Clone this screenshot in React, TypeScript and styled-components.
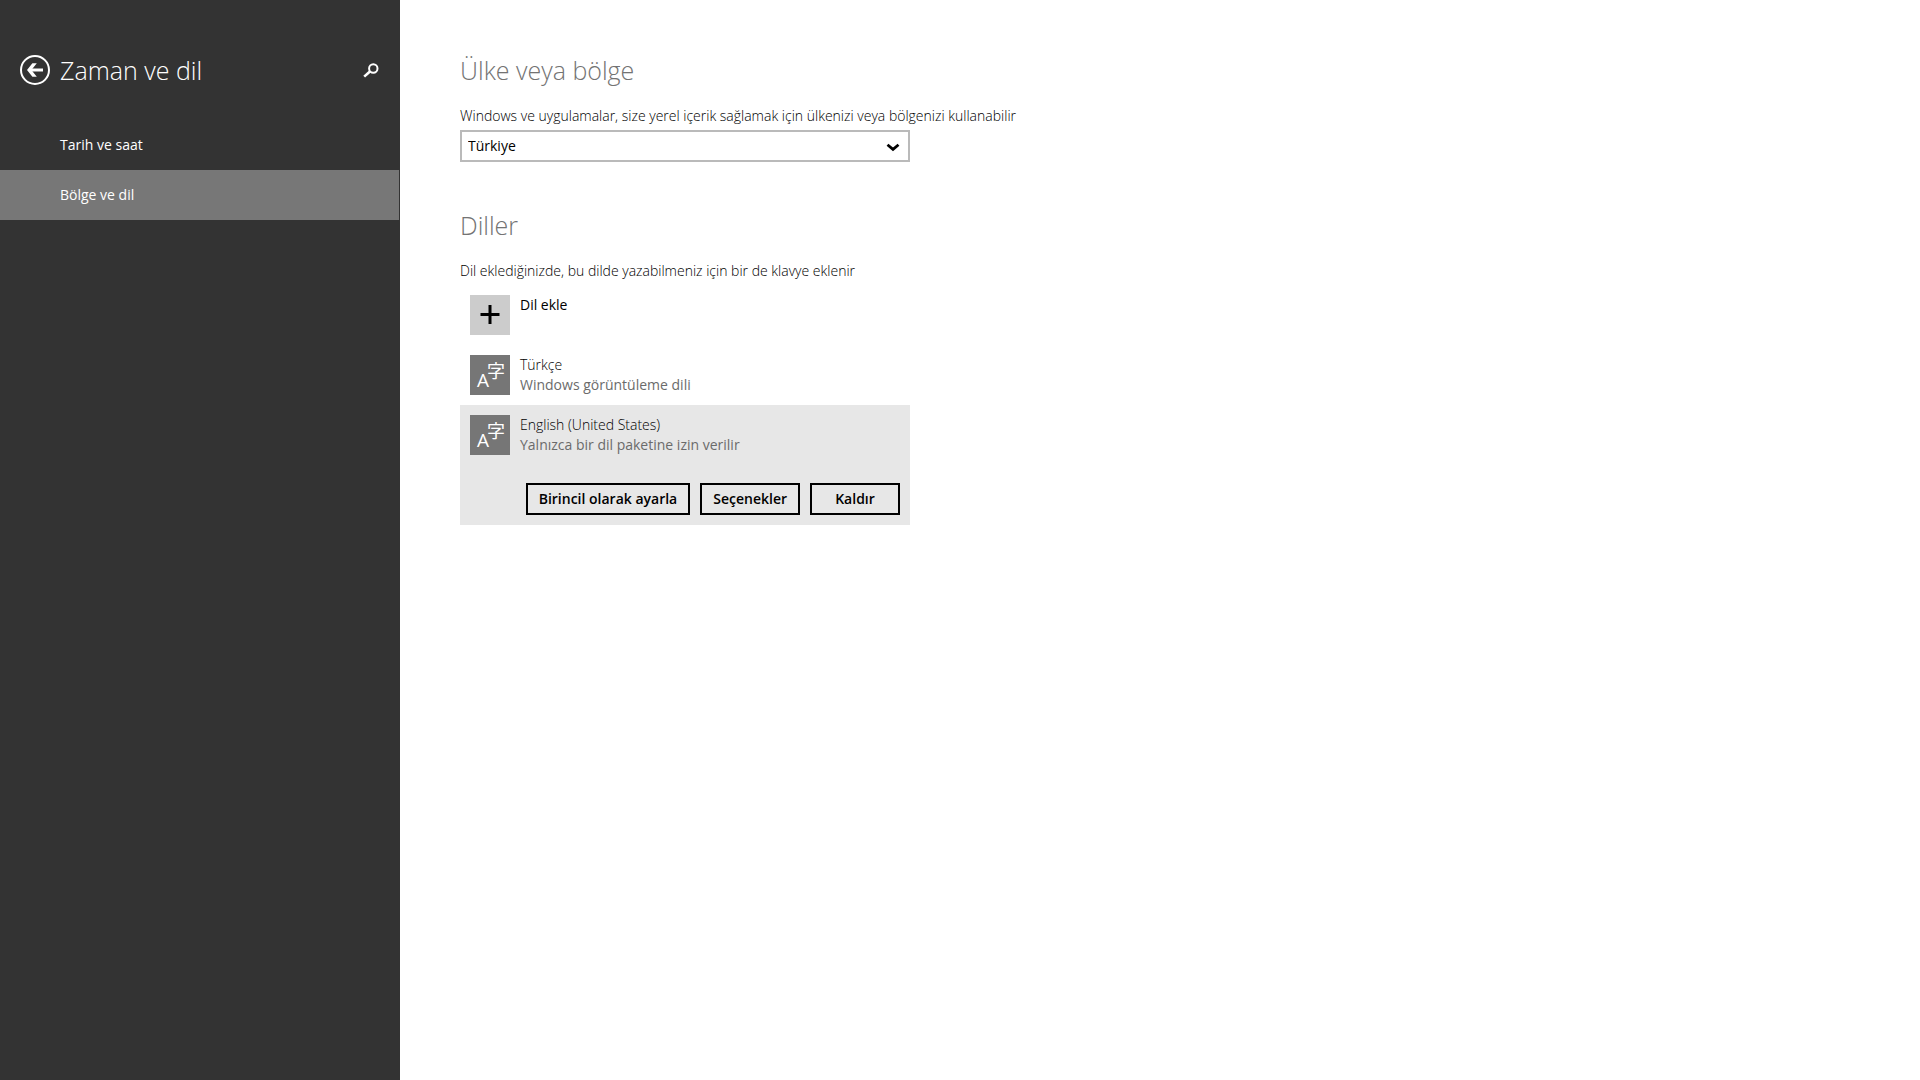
import React, { useState } from "react";
import styled, { createGlobalStyle } from "styled-components";

const GlobalStyle = createGlobalStyle`
  *, *::before, *::after { box-sizing: border-box; }
  body {
    margin: 0;
    background: #fff;
    color: #000;
    font-family: "Segoe UI", "Open Sans", "Noto Sans", sans-serif;
    font-size: 14px;
    line-height: 20px;
  }
  h1, h2, p, ul { margin: 0; padding: 0; }
  button, select { font: inherit; color: inherit; }
`;

const Page = styled.div`
  display: flex;
  min-height: 100vh;
`;

const Sidebar = styled.aside`
  flex: 0 0 400px;
  padding-top: 20px;
  background: #333;
  color: #fff;
`;

const SidebarHeader = styled.header`
  display: flex;
  align-items: center;
  gap: 10px;
  height: 100px;
  padding: 0 21px 0 20px;
`;

const IconButton = styled.button`
  display: flex;
  padding: 0;
  border: 0;
  background: none;
  cursor: pointer;
`;

const PageTitle = styled.h1`
  flex: 1;
  font-size: 25px;
  line-height: 40px;
  font-weight: 300;
`;

const NavList = styled.ul`
  list-style: none;
`;

const NavLink = styled.a<{ $active?: boolean }>`
  display: flex;
  align-items: center;
  height: 50px;
  padding: 0 60px;
  margin-right: 1px;
  color: #fff;
  text-decoration: none;
  background: ${(p) => (p.$active ? "#777" : "transparent")};
`;

const Main = styled.main`
  flex: 1;
  display: flex;
  flex-direction: column;
  gap: 43px;
  padding: 50px 60px;
`;

const Section = styled.section`
  max-width: 640px;
`;

const SectionTitle = styled.h2`
  margin-bottom: 16px;
  color: #737373;
  font-size: 25px;
  line-height: 40px;
  font-weight: 300;
`;

const Caption = styled.p`
  font-weight: 300;
`;

const CaptionLabel = styled.label`
  display: block;
  font-weight: 300;
`;

const SelectBox = styled.div`
  position: relative;
  max-width: 450px;
  margin-top: 4px;

  svg {
    position: absolute;
    right: 10px;
    top: 13px;
    pointer-events: none;
  }
`;

const Select = styled.select`
  appearance: none;
  display: block;
  width: 100%;
  height: 32px;
  padding: 0 30px 0 6px;
  border: 2px solid #bababa;
  border-radius: 0;
  background: #fff;
`;

const LanguageList = styled.ul`
  max-width: 450px;
  margin-top: 4px;
  list-style: none;
`;

const LanguageItem = styled.li<{ $selected?: boolean }>`
  background: ${(p) => (p.$selected ? "#e7e7e7" : "transparent")};
`;

const LanguageButton = styled.button`
  display: flex;
  align-items: flex-start;
  gap: 10px;
  width: 100%;
  padding: 10px;
  border: 0;
  background: none;
  text-align: left;
  cursor: pointer;
`;

const Tile = styled.span<{ $light?: boolean }>`
  display: flex;
  flex: 0 0 40px;
  height: 40px;
  background: ${(p) => (p.$light ? "#ccc" : "#767676")};
`;

const LanguageText = styled.span`
  display: flex;
  flex-direction: column;
`;

const LanguageName = styled.span<{ $light?: boolean }>`
  font-weight: ${(p) => (p.$light ? 300 : 400)};
`;

const LanguageNote = styled.span`
  color: #6b6b6b;
`;

const Actions = styled.div`
  display: flex;
  justify-content: flex-end;
  gap: 10px;
  padding: 18px 10px 10px;
`;

const ActionButton = styled.button`
  min-width: 90px;
  height: 32px;
  padding: 0 11px;
  border: 2px solid #000;
  background: transparent;
  font-weight: 600;
  white-space: nowrap;
  cursor: pointer;
`;

const BackIcon = () => (
  <svg width="30" height="30" viewBox="0 0 30 30" fill="none" stroke="#fff" aria-hidden="true">
    <circle cx="15" cy="15" r="14" strokeWidth="2" />
    <path d="M9.500 15H23" strokeWidth="3" />
    <path d="M12.400 8.200h4.400L11.400 15l5.400 6.800h-4.400L7 15z" fill="#fff" stroke="none" />
  </svg>
);

const SearchIcon = () => (
  <svg width="16" height="15" viewBox="0 0 16 15" fill="none" stroke="#fff" aria-hidden="true">
    <circle cx="10.300" cy="5.500" r="4.200" strokeWidth="2" />
    <path d="M7.200 8.300L1.200 13.600" strokeWidth="2.600" />
  </svg>
);

const ChevronIcon = () => (
  <svg width="14" height="10" viewBox="0 0 14 10" fill="none" aria-hidden="true">
    <path d="M1.500 1.800L7 6.400l5.500-4.600" stroke="#000" strokeWidth="2.800" />
  </svg>
);

const PlusIcon = () => (
  <svg width="40" height="40" viewBox="0 0 40 40" aria-hidden="true">
    <path d="M10.500 19.500h19M20 10v19" stroke="#000" strokeWidth="3" />
  </svg>
);

const LanguageIcon = () => (
  <svg width="40" height="40" viewBox="0 0 40 40" fill="#fff" aria-hidden="true">
    <text x="7" y="32" fontSize="19" fontFamily='"Open Sans", sans-serif'>A</text>
    <text x="17" y="23" fontSize="18" fontFamily='"Noto Sans CJK JP", sans-serif'>字</text>
  </svg>
);

const navItems = ["Tarih ve saat", "Bölge ve dil"];

const languages = [
  { name: "Türkçe", note: "Windows görüntüleme dili" },
  { name: "English (United States)", note: "Yalnızca bir dil paketine izin verilir" },
];

export default function App() {
  const [page, setPage] = useState("Bölge ve dil");
  const [selected, setSelected] = useState("English (United States)");

  return (
    <>
      <GlobalStyle />
      <Page lang="tr">
        <Sidebar>
          <SidebarHeader>
            <IconButton type="button" aria-label="Geri">
              <BackIcon />
            </IconButton>
            <PageTitle>Zaman ve dil</PageTitle>
            <IconButton type="button" aria-label="Ara">
              <SearchIcon />
            </IconButton>
          </SidebarHeader>
          <nav>
            <NavList>
              {navItems.map((item) => (
                <li key={item}>
                  <NavLink href="#" $active={item === page} onClick={() => setPage(item)}>
                    {item}
                  </NavLink>
                </li>
              ))}
            </NavList>
          </nav>
        </Sidebar>
        <Main>
          <Section>
            <SectionTitle>Ülke veya bölge</SectionTitle>
            <CaptionLabel htmlFor="country">
              Windows ve uygulamalar, size yerel içerik sağlamak için ülkenizi veya bölgenizi kullanabilir
            </CaptionLabel>
            <SelectBox>
              <Select id="country" defaultValue="Türkiye">
                <option>Türkiye</option>
              </Select>
              <ChevronIcon />
            </SelectBox>
          </Section>
          <Section>
            <SectionTitle>Diller</SectionTitle>
            <Caption>Dil eklediğinizde, bu dilde yazabilmeniz için bir de klavye eklenir</Caption>
            <LanguageList>
              <LanguageItem>
                <LanguageButton type="button">
                  <Tile $light>
                    <PlusIcon />
                  </Tile>
                  <LanguageName>Dil ekle</LanguageName>
                </LanguageButton>
              </LanguageItem>
              {languages.map(({ name, note }) => (
                <LanguageItem key={name} $selected={name === selected}>
                  <LanguageButton type="button" onClick={() => setSelected(name)}>
                    <Tile>
                      <LanguageIcon />
                    </Tile>
                    <LanguageText>
                      <LanguageName $light>{name}</LanguageName>
                      <LanguageNote>{note}</LanguageNote>
                    </LanguageText>
                  </LanguageButton>
                  {name === selected && (
                    <Actions>
                      <ActionButton type="button">Birincil olarak ayarla</ActionButton>
                      <ActionButton type="button">Seçenekler</ActionButton>
                      <ActionButton type="button">Kaldır</ActionButton>
                    </Actions>
                  )}
                </LanguageItem>
              ))}
            </LanguageList>
          </Section>
        </Main>
      </Page>
    </>
  );
}
